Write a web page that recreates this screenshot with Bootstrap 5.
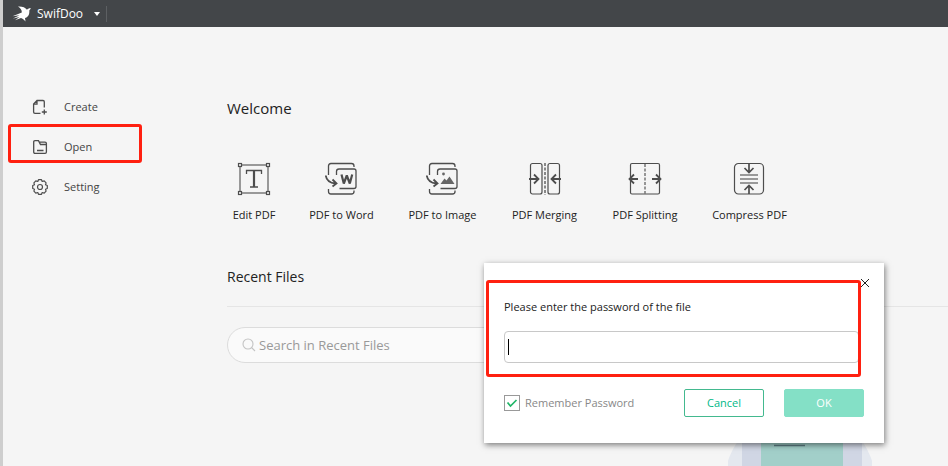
<!DOCTYPE html>
<html lang="en">
<head>
<meta charset="utf-8">
<meta name="viewport" content="width=device-width, initial-scale=1">
<title>SwifDoo</title>
<link href="https://cdn.jsdelivr.net/npm/bootstrap@5.3.0/dist/css/bootstrap.min.css" rel="stylesheet">
<style>
body{font-family:"Open Sans","Noto Sans",sans-serif;font-size:11px;line-height:16px;background:#f5f5f5;color:#222;border-left:3px solid #cecece}
svg{display:block;flex:none;fill:none;stroke:#4d4d4d}
.btn,.act{font-size:11px;line-height:16px}
.topbar{background:#434649;height:27px;padding-left:9px}
.brand-btn,.brand-btn:hover{color:#fff;gap:5px;height:27px;font-size:12px}
.brand-btn svg{fill:#fff;stroke:none}
.brand-caret{margin-left:6px}
.split{width:1px;height:16px;background:#5d6063;margin-left:6px}
.side{width:224px;padding:60px 0 0 29px}
.side a{color:#444;height:40px;gap:16px}
.callout{border:3px solid #ff2010;border-radius:3px;pointer-events:none}
.callout-open{left:-24px;top:-3px;width:134px;height:39px}
.callout-form{left:2px;top:17px;right:23px;height:97px}
.content{padding-top:69px}
.title{font-size:15px;line-height:24px;color:#222;margin:0}
.recent .title{font-size:14px}
.tools{display:grid;grid-template-columns:44px 67px 71px 69px 68px 77px;column-gap:32px;padding:42px 0 0 5px}
.tools button{color:#222;height:61px;justify-content:space-between}
.recent{padding-top:42px}
.rule{height:1px;background:#e5e5e5;margin-top:17px}
.search{height:36px;margin:20px 100px 0 0;border:1px solid #dcdcdc;border-radius:18px;background:#fafafa;padding-left:14px;gap:3px}
.search svg{stroke:#c4c4c4}
.search input{font-size:13px;color:#888}
.search input::placeholder{color:#999;opacity:1}
.empty{margin:58px 76px 0 auto}
.empty svg{stroke:none}
.pw{left:481px;top:263px;width:400px;background:#fff;box-shadow:1px 2px 6px rgba(0,0,0,.5);padding:36px 20px 26px}
.pw-close{right:14px;top:15px}
.pw-field{height:32px;border:1px solid #c8c8c8;border-radius:4px;margin-top:16px;font-size:13px;padding:0 6px;margin-right:5px}
.text-cursor{width:1px;height:16px;background:#000;left:4px;bottom:8px}
.pw-row{margin-top:26px;gap:20px}
.pw-row label{color:#888;gap:5px}
.tick{appearance:none;width:16px;height:16px;margin:0;border:1px solid #999;background:#fff url("data:image/svg+xml,%3Csvg xmlns='http://www.w3.org/2000/svg' viewBox='0 0 14 14'%3E%3Cpath d='M2.5 6.5l3 3.5 6-6' fill='none' stroke='%2321b668' stroke-width='1.7'/%3E%3C/svg%3E") center/14px}
.act{width:80px;height:28px;border-radius:2px;border:1px solid #43b98f;background:#fff;color:#00b887;padding:0}
.act-ok{background:#84e0c6;border-color:#84e0c6;color:#fff}
</style>
</head>
<body class="vh-100 overflow-hidden position-relative d-flex flex-column">
<header class="topbar d-flex align-items-center flex-shrink-0">
  <button class="brand-btn btn p-0 border-0 rounded-0 d-flex align-items-center" type="button">
    <svg width="20" height="16" viewBox="0 0 20 16"><path d="M6 0.500C10 .2 13.500 1.500 15 3.700C16 2.500 17.300 2 19 2.300L17.300 4.500C17.800 9 15.500 11.500 13 12L13.500 15.500C12 13.800 10.500 12.500 9 12L3 14.300L7.500 11L1 12.500L7.500 9.300L0.500 10.300L9.800 6.500C10 4 8.500 2 6 .5Z"/></svg>
    <span>SwifDoo</span>
    <svg class="brand-caret" width="6" height="4" viewBox="0 0 6 4"><path d="M0 0H6L3 4Z"/></svg>
  </button>
  <span class="split"></span>
</header>
<div class="d-flex flex-grow-1 overflow-hidden">
  <nav class="side flex-shrink-0">
    <a class="d-flex align-items-center text-decoration-none" href="#">
      <svg width="16" height="16" viewBox="0 0 16 16" stroke-width="1.300"><path d="M8.500 14.300H3Q1.600 14.300 1.600 13V5L5 1.500H11Q12.300 1.500 12.300 2.800V8.500M1.800 5.200H5V1.700M12.300 10.500V15.500M9.800 13H14.800"/></svg>
      <span>Create</span>
    </a>
    <div class="position-relative">
      <a class="d-flex align-items-center text-decoration-none" href="#">
        <svg width="16" height="16" viewBox="0 0 16 16" stroke-width="1.300"><path d="M14.400 4.500V13Q14.400 14.300 13.100 14.300H3Q1.700 14.300 1.700 13V3Q1.700 1.700 3 1.700H6.500L8.500 5.500H14.400M7.500 3.200H13Q14.400 3.200 14.400 4.500V5.500M5 11.500H11.500"/></svg>
        <span>Open</span>
      </a>
      <div class="callout callout-open position-absolute"></div>
    </div>
    <a class="d-flex align-items-center text-decoration-none" href="#">
      <svg width="16" height="16" viewBox="0 0 16 16" stroke-width="1.200"><path d="M6.500 .7H9.500L10.200 2.500L12.200 1.900L14.100 3.800L13.500 5.800L15.300 6.500V9.500L13.500 10.200L14.100 12.200L12.200 14.100L10.200 13.500L9.500 15.300H6.500L5.800 13.500L3.800 14.100L1.900 12.200L2.500 10.200L.7 9.500V6.500L2.500 5.800L1.900 3.800L3.800 1.900L5.800 2.500Z" stroke-linejoin="round"/><circle cx="8" cy="8" r="2.500"/></svg>
      <span>Setting</span>
    </a>
  </nav>
  <main class="content flex-grow-1 d-flex flex-column">
    <h1 class="title fw-normal">Welcome</h1>
    <div class="tools">
      <button class="btn p-0 border-0 d-flex flex-column align-items-center text-nowrap" type="button">
        <svg width="34" height="34" viewBox="0 0 34 34"><path d="M3 3H31M3 31H31M3 3V31M31 3V31" stroke="#999" stroke-width="2"/><g fill="#f4f4f4" stroke-width="1.200"><rect x="1.500" y="1.500" width="3" height="3"/><rect x="29.500" y="1.500" width="3" height="3"/><rect x="1.500" y="29.500" width="3" height="3"/><rect x="29.500" y="29.500" width="3" height="3"/></g><path d="M9.500 12V8.500H24.500V12M13 25H21" stroke-width="1.300"/><path d="M17 8.500V25" stroke-width="2.200"/></svg>
        <span>Edit PDF</span>
      </button>
      <button class="btn p-0 border-0 d-flex flex-column align-items-center text-nowrap" type="button">
        <svg width="34" height="34" viewBox="0 0 34 34" stroke-width="1.300" stroke="#666"><path d="M3.500 13V4Q3.500 1.500 6 1.500H26.500Q29 1.500 29 4V5M3.500 27V29.500Q3.500 32 6 32H26.500Q29 32 29 29.500V28.500"/><path d="M11.500 13V9.500Q11.500 7 14 7H29Q31 7 31 9V24.500Q31 26.500 29 26.500H14.500"/><path d="M.8 13.500Q1.500 20.500 10.500 21.500M7.500 17.500L11.500 21.500L7.500 24.500" stroke-width="1.800"/><path d="M16.500 12.500L18.800 21.500L21.800 13.500L24.800 21.500L27.200 12.500" stroke-width="2.200" stroke-linejoin="bevel"/></svg>
        <span>PDF to Word</span>
      </button>
      <button class="btn p-0 border-0 d-flex flex-column align-items-center text-nowrap" type="button">
        <svg width="34" height="34" viewBox="0 0 34 34" stroke-width="1.300" stroke="#666"><path d="M3.500 13V4Q3.500 1.500 6 1.500H26.500Q29 1.500 29 4V5M3.500 27V29.500Q3.500 32 6 32H26.500Q29 32 29 29.500V28.500"/><path d="M11.500 13V9.500Q11.500 7 14 7H29Q31 7 31 9V24.500Q31 26.500 29 26.500H14.500"/><path d="M.8 13.500Q1.500 20.500 10.500 21.500M7.500 17.500L11.500 21.500L7.500 24.500" stroke-width="1.800"/><path d="M14.500 22L18.500 16.500L20.500 18.500L23.500 14.500L28.500 22Z" fill="#666" stroke="none"/><circle cx="17.500" cy="12" r="1.400" fill="#666" stroke="none"/></svg>
        <span>PDF to Image</span>
      </button>
      <button class="btn p-0 border-0 d-flex flex-column align-items-center text-nowrap" type="button">
        <svg width="34" height="34" viewBox="0 0 34 34"><rect x="2.500" y="1.500" width="11.500" height="30.500" rx="2" stroke-width="1.200"/><rect x="20" y="1.500" width="11.500" height="30.500" rx="2" stroke-width="1.200"/><path d="M17 1V33" stroke="#888" stroke-width="2" stroke-dasharray="3 1.500"/><path d="M1 17H10M6 12.500L10.500 17L6 21.500M33 17H24M28 12.500L23.500 17L28 21.500" stroke-width="1.800"/></svg>
        <span>PDF Merging</span>
      </button>
      <button class="btn p-0 border-0 d-flex flex-column align-items-center text-nowrap" type="button">
        <svg width="34" height="34" viewBox="0 0 34 34"><rect x="2.500" y="1.500" width="29" height="30.500" rx="1.500" stroke-width="1.200"/><path d="M17 2V32" stroke="#777" stroke-width="1.500" stroke-dasharray="3 1.500"/><path d="M10 17H2M6 12.500L1.500 17L6 21.500M24 17H32M28 12.500L32.500 17L28 21.500" stroke-width="1.800"/></svg>
        <span>PDF Splitting</span>
      </button>
      <button class="btn p-0 border-0 d-flex flex-column align-items-center text-nowrap" type="button">
        <svg width="34" height="34" viewBox="0 0 34 34"><rect x="1.500" y="1.500" width="29" height="30.500" rx="4" stroke-width="1.200"/><path d="M7 13H25M7 17H25M7 21H25" stroke="#999" stroke-width="1.800"/><path d="M16 2V10M11.500 6L16 10.500L20.500 6M16 32V24M11.500 28L16 23.500L20.500 28" stroke-width="1.700"/></svg>
        <span>Compress PDF</span>
      </button>
    </div>
    <section class="recent d-flex flex-column">
      <h2 class="title fw-normal">Recent Files</h2>
      <div class="rule"></div>
      <label class="search d-flex align-items-center">
        <svg width="14" height="14" viewBox="0 0 14 14" stroke-width="1.100"><circle cx="6" cy="6" r="5"/><path d="M9.500 9.500L13 13"/></svg>
        <input class="border-0 bg-transparent p-0 flex-grow-1" type="text" placeholder="Search in Recent Files" aria-label="Search in Recent Files">
      </label>
      <div class="empty">
        <svg width="144" height="144" viewBox="0 0 144 144"><circle cx="72" cy="64" r="76" fill="#e4e8ef"/><path d="M14 0H134V144H14Z" fill="#d0d6e4"/><path d="M33 0H115V144H33Z" fill="#a2cfc9"/><path d="M46 24.500H77" stroke="#5c7c82" stroke-width="1.500"/></svg>
      </div>
    </section>
  </main>
</div>
<form class="pw position-absolute" role="dialog" aria-label="Password">
  <button class="pw-close btn p-0 border-0 position-absolute" type="button" aria-label="Close"><svg width="10" height="10" viewBox="0 0 10 10"><path d="M1 1L9 9M9 1L1 9" stroke="#222"/></svg></button>
  <div class="position-relative d-flex flex-column">
    <label for="pw">Please enter the password of the file</label>
    <input class="pw-field" id="pw" type="password">
    <span class="text-cursor position-absolute"></span>
  </div>
  <div class="pw-row d-flex align-items-center">
    <label class="d-flex align-items-center me-auto"><input class="tick" type="checkbox" checked><span>Remember Password</span></label>
    <button class="act" type="button">Cancel</button>
    <button class="act act-ok" type="button">OK</button>
  </div>
  <div class="callout callout-form position-absolute"></div>
</form>
<script src="https://cdn.jsdelivr.net/npm/bootstrap@5.3.0/dist/js/bootstrap.bundle.min.js"></script>
</body>
</html>
